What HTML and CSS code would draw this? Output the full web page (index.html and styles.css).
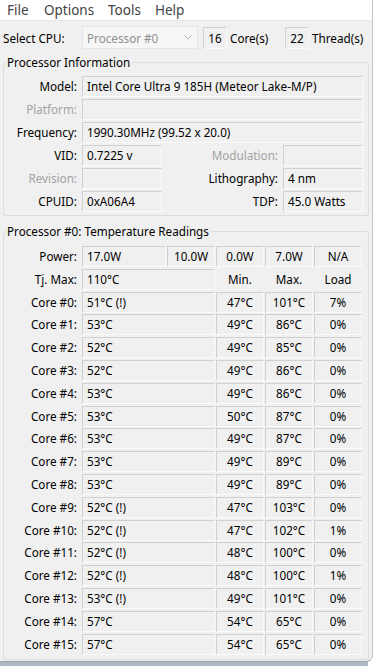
FILE: index.html
```html
<!DOCTYPE html>
<html lang="en">
<head>
  <meta charset="UTF-8">
  <meta name="viewport" content="width=device-width, initial-scale=1.0">
  <title>Core Temp</title>
  <link rel="stylesheet" href="styles.css">
</head>
<body>
  <div class="window">
    <nav class="menubar">
      <span class="menu-item menu-file">File</span>
      <span class="menu-item menu-options">Options</span>
      <span class="menu-item menu-tools">Tools</span>
      <span class="menu-item">Help</span>
    </nav>

    <div class="cpu-row">
      <span class="cpu-label">Select CPU:</span>
      <div class="combo">
        <span>Processor #0</span>
        <svg class="chevron" width="8" height="5" viewBox="0 0 8 5"><polyline points="0.5,0.5 4,4 7.5,0.5" fill="none" stroke="#b5b5b5" stroke-width="1"/></svg>
      </div>
      <span class="count">16</span>
      <span class="count-label">Core(s)</span>
      <span class="count">22</span>
      <span class="count-label">Thread(s)</span>
    </div>

    <!-- Processor Information -->
    <fieldset class="group info">
      <legend>Processor Information</legend>
      <div class="info-grid">
        <span class="label">Model:</span>
        <span class="field wide">Intel Core Ultra 9 185H (Meteor Lake-M/P)</span>

        <span class="label disabled">Platform:</span>
        <span class="field wide"></span>

        <span class="label">Frequency:</span>
        <span class="field wide">1990.30MHz (99.52 x 20.0)</span>

        <span class="label">VID:</span>
        <span class="field">0.7225 v</span>
        <span class="label disabled">Modulation:</span>
        <span class="field"></span>

        <span class="label disabled">Revision:</span>
        <span class="field"></span>
        <span class="label">Lithography:</span>
        <span class="field">4 nm</span>

        <span class="label">CPUID:</span>
        <span class="field">0xA06A4</span>
        <span class="label">TDP:</span>
        <span class="field">45.0 Watts</span>
      </div>
    </fieldset>

    <!-- Temperature Readings -->
    <fieldset class="group temps">
      <legend>Processor #0: Temperature Readings</legend>
      <div class="temp-grid">
        <span class="label">Power:</span>
        <span class="field">17.0W</span>
        <span class="field center">10.0W</span>
        <span class="field center">0.0W</span>
        <span class="field center">7.0W</span>
        <span class="field center">N/A</span>

        <span class="label">Tj. Max:</span>
        <span class="field span2">110°C</span>
        <span class="head">Min.</span>
        <span class="head">Max.</span>
        <span class="head">Load</span>

        <span class="label">Core #0:</span><span class="field span2">51°C (!)</span><span class="field center">47°C</span><span class="field center">101°C</span><span class="field center">7%</span>
        <span class="label">Core #1:</span><span class="field span2">53°C</span><span class="field center">49°C</span><span class="field center">86°C</span><span class="field center">0%</span>
        <span class="label">Core #2:</span><span class="field span2">52°C</span><span class="field center">49°C</span><span class="field center">85°C</span><span class="field center">0%</span>
        <span class="label">Core #3:</span><span class="field span2">52°C</span><span class="field center">49°C</span><span class="field center">86°C</span><span class="field center">0%</span>
        <span class="label">Core #4:</span><span class="field span2">53°C</span><span class="field center">49°C</span><span class="field center">86°C</span><span class="field center">0%</span>
        <span class="label">Core #5:</span><span class="field span2">53°C</span><span class="field center">50°C</span><span class="field center">87°C</span><span class="field center">0%</span>
        <span class="label">Core #6:</span><span class="field span2">53°C</span><span class="field center">49°C</span><span class="field center">87°C</span><span class="field center">0%</span>
        <span class="label">Core #7:</span><span class="field span2">53°C</span><span class="field center">49°C</span><span class="field center">89°C</span><span class="field center">0%</span>
        <span class="label">Core #8:</span><span class="field span2">53°C</span><span class="field center">49°C</span><span class="field center">89°C</span><span class="field center">0%</span>
        <span class="label">Core #9:</span><span class="field span2">52°C (!)</span><span class="field center">47°C</span><span class="field center">103°C</span><span class="field center">0%</span>
        <span class="label">Core #10:</span><span class="field span2">52°C (!)</span><span class="field center">47°C</span><span class="field center">102°C</span><span class="field center">1%</span>
        <span class="label">Core #11:</span><span class="field span2">52°C (!)</span><span class="field center">48°C</span><span class="field center">100°C</span><span class="field center">0%</span>
        <span class="label">Core #12:</span><span class="field span2">52°C (!)</span><span class="field center">48°C</span><span class="field center">100°C</span><span class="field center">1%</span>
        <span class="label">Core #13:</span><span class="field span2">53°C (!)</span><span class="field center">49°C</span><span class="field center">101°C</span><span class="field center">0%</span>
        <span class="label">Core #14:</span><span class="field span2">57°C</span><span class="field center">54°C</span><span class="field center">65°C</span><span class="field center">0%</span>
        <span class="label">Core #15:</span><span class="field span2">57°C</span><span class="field center">54°C</span><span class="field center">65°C</span><span class="field center">0%</span>
      </div>
    </fieldset>
  </div>
  <div class="desktop"></div>
</body>
</html>
```

FILE: styles.css
```css
body {
  margin: 0;
  background: #fff;
  font-family: "Noto Sans", "DejaVu Sans", sans-serif;
  font-size: 11.7px;
  color: #000;
}
.window {
  width: 373px;
  height: 662px;
  box-sizing: border-box;
  background: #f0f0f0;
  border-right: 1px solid #c4c4c4;
  border-bottom: 1px solid #9aa3ad;
  border-bottom-right-radius: 7px;
  overflow: hidden;
}
.desktop {
  width: 368px;
  height: 4px;
  background: #aeb8c4;
}
.menubar {
  height: 20px;
  background: #fff;
  border-bottom: 1px solid #e6e6e6;
  display: flex;
  align-items: center;
  padding-left: 7px;
  font-size: 13.5px;
  color: #444;
}
.menu-file {
  width: 37px;
}
.menu-options {
  width: 64px;
}
.menu-tools {
  width: 47px;
}
.cpu-row {
  display: flex;
  align-items: center;
  margin-top: 5px;
  padding-left: 3px;
  height: 23px;
  white-space: nowrap;
}
.cpu-label {
  width: 79px;
}
.combo {
  width: 116px;
  height: 23px;
  box-sizing: border-box;
  border: 1px solid #e4e4e4;
  background: #f6f6f6;
  color: #8f8f8f;
  display: flex;
  align-items: center;
  justify-content: space-between;
  padding: 0 5px 0 4px;
}
.count {
  width: 24px;
  height: 22px;
  box-sizing: border-box;
  margin-left: 5px;
  margin-top: 1px;
  border: 1px solid;
  border-color: #d2d2d2 #fafafa #fafafa #d2d2d2;
  display: flex;
  align-items: center;
  justify-content: center;
}
.count-label {
  width: 50px;
  margin-left: 3px;
  margin-top: 1px;
}
.group {
  margin: 5px 0 0 3px;
  width: 366px;
  box-sizing: border-box;
  padding: 6px 0 3px 0;
  border: 1px solid #dcdcdc;
  border-radius: 3px;
}
.group legend {
  padding: 0 1px;
  margin-left: 2px;
  line-height: 16px;
}
.temps {
  margin-top: 7px;
  padding-top: 7px;
  padding-bottom: 4px;
}
.info-grid {
  display: grid;
  grid-template-columns: 77px 80px 119px 80px;
  grid-auto-rows: 21px;
  column-gap: 1px;
  row-gap: 2px;
}
.temp-grid {
  display: grid;
  grid-template-columns: 77px 84px 48px 48px 48px 48px;
  grid-auto-rows: 21px;
  column-gap: 1px;
  row-gap: 1.8px;
}
.label {
  text-align: right;
  padding-right: 4px;
  line-height: 21px;
  white-space: nowrap;
}
.disabled {
  color: #a3a3a3;
}
.field {
  box-sizing: border-box;
  border: 1px solid;
  border-color: #d0d0d0 #fbfbfb #fbfbfb #d0d0d0;
  padding-left: 4px;
  line-height: 19px;
  white-space: nowrap;
}
.wide {
  grid-column: 2 / 5;
}
.span2 {
  grid-column: 2 / 4;
}
.center {
  text-align: center;
  padding-left: 0;
}
.head {
  text-align: center;
  line-height: 21px;
}
```
